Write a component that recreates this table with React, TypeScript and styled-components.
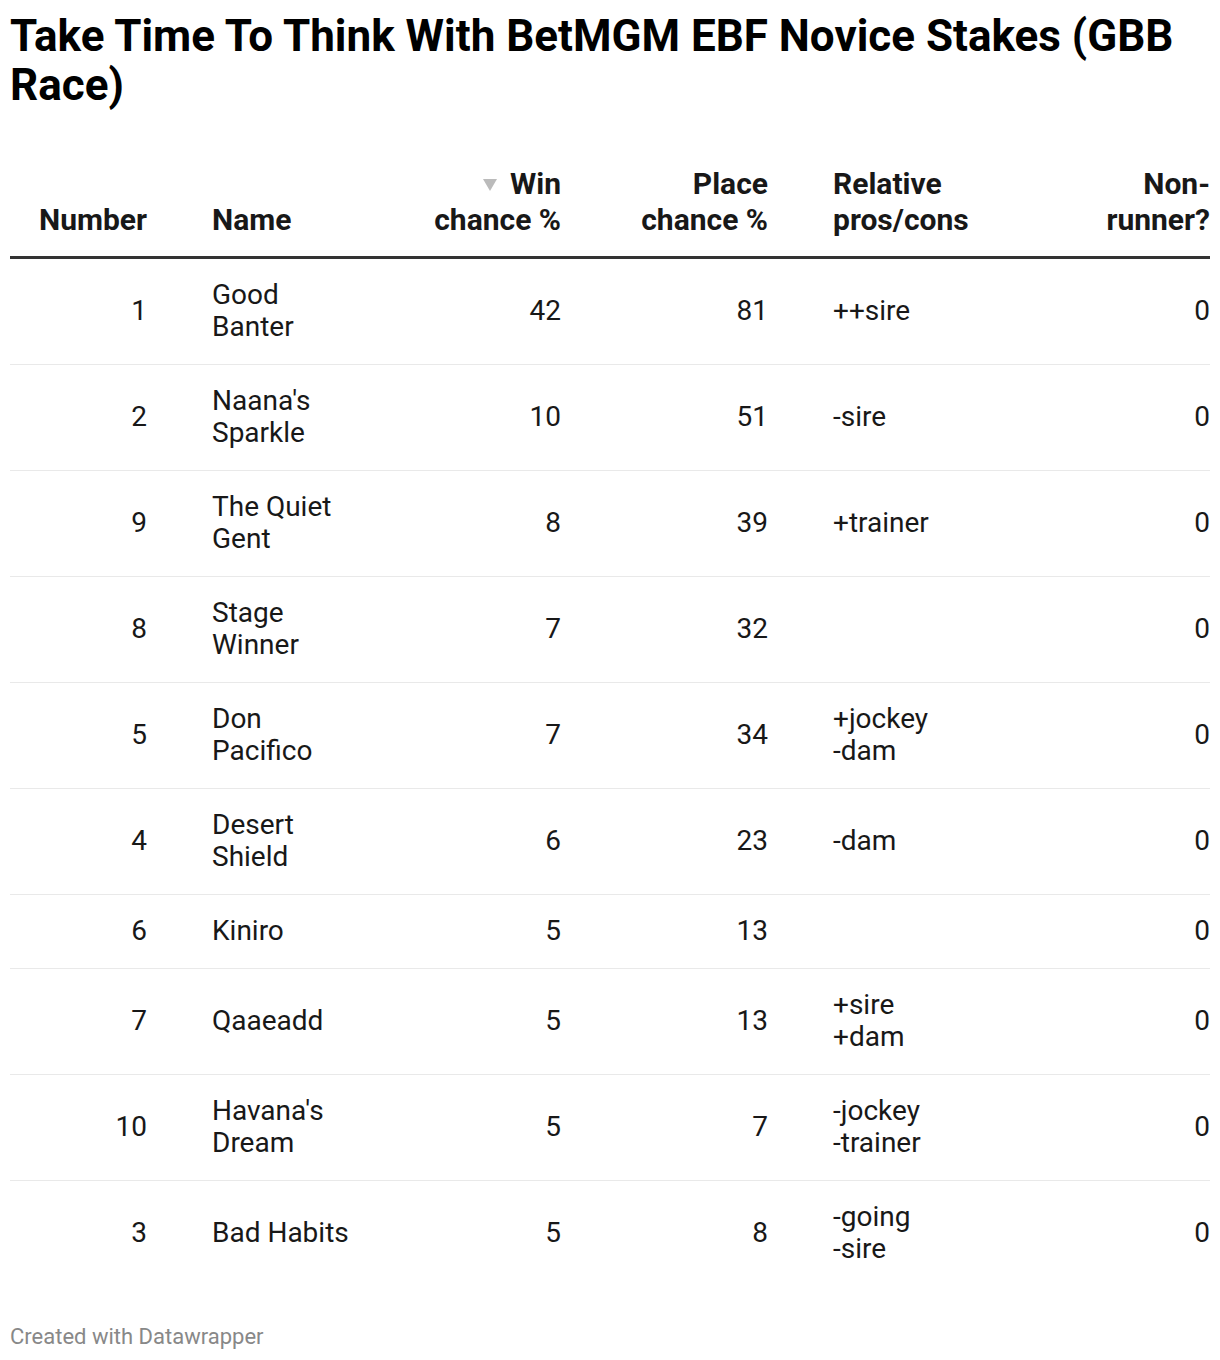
import React from 'react'
import styled, { createGlobalStyle } from 'styled-components';

type Runner = {
  number: number
  name: string[]
  win: number
  place: number
  notes: string[]
  nonRunner: number
}

const runners: Runner[] = [
  { number: 1, name: ['Good', 'Banter'], win: 42, place: 81, notes: ['++sire'], nonRunner: 0 },
  { number: 2, name: ["Naana's", 'Sparkle'], win: 10, place: 51, notes: ['-sire'], nonRunner: 0 },
  { number: 9, name: ['The Quiet', 'Gent'], win: 8, place: 39, notes: ['+trainer'], nonRunner: 0 },
  { number: 8, name: ['Stage', 'Winner'], win: 7, place: 32, notes: [], nonRunner: 0 },
  { number: 5, name: ['Don', 'Pacifico'], win: 7, place: 34, notes: ['+jockey', '-dam'], nonRunner: 0 },
  { number: 4, name: ['Desert', 'Shield'], win: 6, place: 23, notes: ['-dam'], nonRunner: 0 },
  { number: 6, name: ['Kiniro'], win: 5, place: 13, notes: [], nonRunner: 0 },
  { number: 7, name: ['Qaaeadd'], win: 5, place: 13, notes: ['+sire', '+dam'], nonRunner: 0 },
  { number: 10, name: ["Havana's", 'Dream'], win: 5, place: 7, notes: ['-jockey', '-trainer'], nonRunner: 0 },
  { number: 3, name: ['Bad Habits'], win: 5, place: 8, notes: ['-going', '-sire'], nonRunner: 0 },
]

const lines = (items: string[]) =>
  items.map((t, i) => (
    <React.Fragment key={i}>
      {i > 0 && <br />}
      {t}
    </React.Fragment>
  ))

const App = () => {
  return (
    <Page>
      <GlobalStyle />
      <Title>Take Time To Think With BetMGM EBF Novice Stakes (GBB Race)</Title>
      <Table>
        <HeaderRow>
          <HeadCell align="right">Number</HeadCell>
          <HeadCell indent>Name</HeadCell>
          <HeadCell align="right">
            <SortArrow /> Win<br />chance %
          </HeadCell>
          <HeadCell align="right">Place<br />chance %</HeadCell>
          <HeadCell indent>Relative<br />pros/cons</HeadCell>
          <HeadCell align="right">Non-<br />runner?</HeadCell>
        </HeaderRow>
        {runners.map((r) => (
          <Row key={r.number}>
            <Cell align="right">{r.number}</Cell>
            <Cell indent>{lines(r.name)}</Cell>
            <Cell align="right">{r.win}</Cell>
            <Cell align="right">{r.place}</Cell>
            <Cell indent>{lines(r.notes)}</Cell>
            <Cell align="right">{r.nonRunner}</Cell>
          </Row>
        ))}
      </Table>
      <Footer>Created with Datawrapper</Footer>
    </Page>
  )
}

export default App

const GlobalStyle = createGlobalStyle`
  body {
    margin: 0;
    background: #fff;
    font-family: Roboto, "Liberation Sans", sans-serif;
    color: #181818;
  }
`;

const Page = styled.div`
  padding: 12px 10px 0;
  width: 1200px;
`;

const Title = styled.h1`
  margin: 0;
  font-size: 44px;
  line-height: 49px;
  font-weight: 700;
  color: #000;
`;

const Table = styled.div`
  margin-top: 56px;
  display: flex;
  flex-direction: column;
`;

const columns = '137px 205px 209px 207px 1fr 110px';

const HeaderRow = styled.div`
  display: grid;
  grid-template-columns: ${columns};
  align-items: end;
  padding-bottom: 18px;
  border-bottom: 3px solid #333;
`;

const Row = styled.div`
  display: grid;
  grid-template-columns: ${columns};
  align-items: center;
  padding: 20px 0 21px;
  border-bottom: 1px solid #e9e9e9;

  &:last-child {
    border-bottom: none;
  }
`;

const HeadCell = styled.div<{ align?: 'right'; indent?: boolean }>`
  font-size: 30px;
  line-height: 36px;
  font-weight: 700;
  color: #181818;
  text-align: ${(p) => p.align ?? 'left'};
  padding-left: ${(p) => (p.indent ? '65px' : '0')};
`;

const Cell = styled.div<{ align?: 'right'; indent?: boolean }>`
  font-size: 28px;
  line-height: 32px;
  color: #181818;
  min-height: 32px;
  text-align: ${(p) => p.align ?? 'left'};
  padding-left: ${(p) => (p.indent ? '65px' : '0')};
`;

const SortArrow = styled.span`
  display: inline-block;
  width: 0;
  height: 0;
  border-left: 7px solid transparent;
  border-right: 7px solid transparent;
  border-top: 12px solid #bbb;
  margin-right: 6px;
  vertical-align: 3px;
`;

const Footer = styled.div`
  margin-top: 38px;
  font-size: 22px;
  line-height: 26px;
  color: #888;
`;
